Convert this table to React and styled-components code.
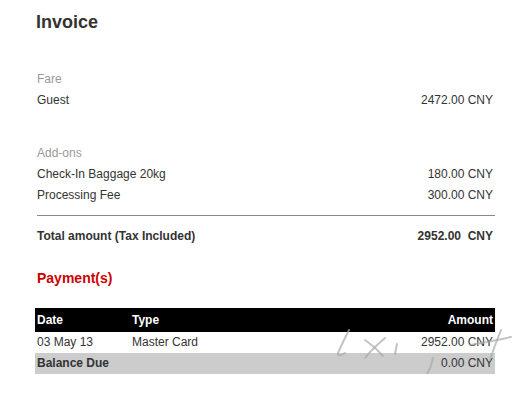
import React from "react";
import styled, { createGlobalStyle } from "styled-components";

const GlobalStyle = createGlobalStyle`
  html, body {
    margin: 0;
    padding: 0;
    background: #ffffff;
  }
  body {
    font-family: "Liberation Sans", Arial, sans-serif;
    font-size: 12px;
    color: #333333;
  }
`;

const Page = styled.div`
  width: 460px;
  padding: 12px 0 0 35px;
`;

const Title = styled.h1`
  margin: 0 0 0 1px;
  font-size: 18px;
  line-height: 21px;
  font-weight: bold;
  color: #333333;
`;

const Section = styled.section`
  margin-top: ${(p) => p.$gap}px;
  padding: 0 2px;
`;

const Label = styled.div`
  line-height: 21px;
  color: #999999;
`;

const Row = styled.div`
  display: flex;
  justify-content: space-between;
  line-height: 21px;
  color: #333333;
  font-weight: ${(p) => (p.$bold ? "bold" : "normal")};
`;

const Divider = styled.hr`
  margin: 9px 0 0 2px;
  border: 0;
  height: 1px;
  background: #8a8a8a;
`;

const PaymentTitle = styled.h2`
  margin: 21px 0 0 2px;
  font-size: 14px;
  line-height: 21px;
  font-weight: bold;
  color: #cc0000;
`;

const Table = styled.div`
  position: relative;
  margin-top: 19px;
`;

const TableRow = styled.div`
  display: grid;
  grid-template-columns: 95px 1fr auto;
  padding: 0 2px;
  height: ${(p) => (p.$head ? 24 : 21)}px;
  line-height: ${(p) => (p.$head ? 24 : 21)}px;
  background: ${(p) => p.$bg || "transparent"};
  color: ${(p) => p.$color || "#333333"};
  font-weight: ${(p) => (p.$bold ? "bold" : "normal")};
`;

const Cell = styled.div`
  text-align: ${(p) => (p.$right ? "right" : "left")};
  font-weight: ${(p) => (p.$weight ? p.$weight : "inherit")};
  white-space: nowrap;
`;

/* faint hand-drawn signature lying across the payment rows */
const Scribble = styled.svg`
  position: absolute;
  left: 280px;
  top: 20px;
  pointer-events: none;
`;

export default function App() {
  return (
    <>
      <GlobalStyle />
      <Page>
        <Title>Invoice</Title>

        <Section $gap={36}>
          <Label>Fare</Label>
          <Row>
            <span>Guest</span>
            <span>2472.00 CNY</span>
          </Row>
        </Section>

        <Section $gap={32}>
          <Label>Add-ons</Label>
          <Row>
            <span>Check-In Baggage 20kg</span>
            <span>180.00 CNY</span>
          </Row>
          <Row>
            <span>Processing Fee</span>
            <span>300.00 CNY</span>
          </Row>
        </Section>

        <Divider />

        <Section $gap={10}>
          <Row $bold>
            <span>Total amount (Tax Included)</span>
            <span>2952.00&nbsp; CNY</span>
          </Row>
        </Section>

        <PaymentTitle>Payment(s)</PaymentTitle>

        <Table>
          <TableRow $head $bg="#000000" $color="#ffffff" $bold>
            <Cell>Date</Cell>
            <Cell>Type</Cell>
            <Cell $right>Amount</Cell>
          </TableRow>
          <TableRow>
            <Cell>03 May 13</Cell>
            <Cell>Master Card</Cell>
            <Cell $right>2952.00 CNY</Cell>
          </TableRow>
          <TableRow $bg="#cccccc">
            <Cell $weight="bold">Balance Due</Cell>
            <Cell />
            <Cell $right>0.00 CNY</Cell>
          </TableRow>
          <Scribble width="200" height="70" viewBox="0 0 200 70">
            <g
              fill="none"
              stroke="rgba(170,170,170,0.7)"
              strokeWidth="2"
              strokeLinecap="round"
            >
              <path d="M34 2 C30 10 26 18 23 25 C22 28 26 28 30 25" />
              <path d="M50 12 C56 16 62 21 68 28" />
              <path d="M70 10 C63 16 56 22 50 30" />
              <path d="M82 16 L80 26" />
              <path d="M118 30 C116 40 112 48 106 54 C103 56 101 54 103 51" />
              <path d="M186 2 C182 12 178 22 175 32" />
              <path d="M155 17 C168 15 182 12 196 9" />
            </g>
          </Scribble>
        </Table>
      </Page>
    </>
  );
}
